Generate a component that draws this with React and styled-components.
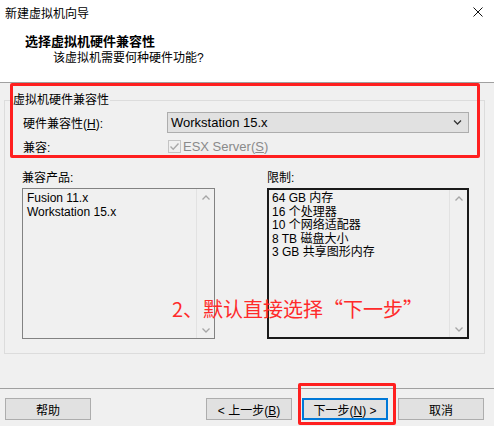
import styled, { createGlobalStyle } from "styled-components";

const GlobalStyle = createGlobalStyle`
  html, body {
    margin: 0;
    padding: 0;
    background: #ffffff;
  }
  body {
    font-family: "Liberation Sans", "Noto Sans CJK SC", sans-serif;
    font-size: 12px;
    color: #000;
  }
`;

const Window = styled.div`
  position: relative;
  width: 494px;
  height: 426px;
  display: flex;
  flex-direction: column;
  background: #f0f0f0;
  overflow: hidden;
`;

const Header = styled.header`
  height: 82px;
  background: #ffffff;
  border-bottom: 1px solid #a0a0a0;
  display: flex;
  flex-direction: column;
`;

const TitleBar = styled.div`
  height: 24px;
  display: flex;
  align-items: center;
  justify-content: space-between;
  padding: 0 11px 0 5px;
  font-size: 12px;
`;

const Heading = styled.div`
  margin-top: 10px;
  padding-left: 25px;
  font-size: 13px;
  font-weight: bold;
  line-height: 16px;
`;

const SubHeading = styled.div`
  padding-left: 53px;
  line-height: 16px;
`;

const Body = styled.main`
  height: 305px;
  padding: 9px 9px 0 4px;
  box-sizing: border-box;
`;

const Group = styled.fieldset`
  margin: 0;
  padding: 0 0 14px 0;
  border: 1px solid #dcdcdc;
  min-width: 0;
`;

const Legend = styled.legend`
  margin-left: 8px;
  padding: 0 1px 0 0;
  line-height: 16px;
`;

const Row = styled.div`
  display: flex;
  align-items: center;
  height: ${(p) => p.$h}px;
  margin-top: ${(p) => p.$mt}px;
  padding-left: 18px;
`;

const Label = styled.span`
  width: 144px;
  flex: none;
`;

const Select = styled.div`
  width: 302px;
  height: 21px;
  box-sizing: border-box;
  border: 1px solid #adadad;
  background: #e1e1e1;
  display: flex;
  align-items: center;
  justify-content: space-between;
  padding: 0 6px 0 3px;
  font-size: 13px;
`;

const Check = styled.label`
  display: flex;
  align-items: center;
  gap: 2px;
  margin-left: 1px;
  color: #8a8a8a;
  font-size: 13px;
`;

const ListGrid = styled.div`
  display: grid;
  grid-template-columns: 193px 202px;
  column-gap: 52px;
  margin-top: 15px;
  padding-left: 17px;
`;

const ListLabel = styled.div`
  line-height: 16px;
  margin-bottom: 2px;
`;

const ListBox = styled.div`
  height: 151px;
  box-sizing: border-box;
  border: ${(p) => (p.$focus ? "2px solid #1a1a1a" : "1px solid #828282")};
  display: flex;
  background: #f0f0f0;
`;

const ListItems = styled.div`
  flex: 1;
  padding: ${(p) => (p.$focus ? "2px 0 0 3px" : "3px 0 0 4px")};
  line-height: 13.5px;
  font-size: 12px;
`;

const ScrollBar = styled.div`
  width: 17px;
  border-left: 1px solid #e2e2e2;
  display: flex;
  flex-direction: column;
  justify-content: space-between;
  align-items: center;
  padding: 6px 0 5px;
`;

const Footer = styled.footer`
  border-top: 1px solid #a0a0a0;
  padding: 9px 8px 0 5px;
  display: flex;
  gap: 10px;
`;

const Button = styled.button`
  width: 86px;
  height: 22px;
  box-sizing: border-box;
  background: #e1e1e1;
  border: ${(p) => (p.$default ? "2px solid #0078d7" : "1px solid #adadad")};
  font-family: "Liberation Sans", "Noto Sans CJK SC", sans-serif;
  font-size: 12px;
  color: #000;
  padding: 0;
  margin-right: ${(p) => p.$push || 0}px;
`;

const Highlight = styled.div`
  position: absolute;
  left: ${(p) => p.$x}px;
  top: ${(p) => p.$y}px;
  width: ${(p) => p.$w}px;
  height: ${(p) => p.$h}px;
  box-sizing: border-box;
  border: 3px solid #ff1f1f;
  border-radius: 2px;
  pointer-events: none;
`;

const Note = styled.div`
  position: absolute;
  left: 172px;
  top: 296px;
  font-family: "Noto Sans CJK SC", sans-serif;
  font-size: 20px;
  line-height: 26px;
  color: #ff2a2a;
  white-space: nowrap;
`;

const U = styled.span`
  text-decoration: underline;
`;

function Chevron({ up, color = "#a6a6a6", w = 8 }) {
  return (
    <svg width={w} height="5" viewBox="0 0 8 5">
      <path
        d={up ? "M0.5 4.5 L4 1 L7.5 4.5" : "M0.5 0.5 L4 4 L7.5 0.5"}
        fill="none"
        stroke={color}
        strokeWidth="1.3"
      />
    </svg>
  );
}

function Scroll() {
  return (
    <ScrollBar>
      <Chevron up />
      <Chevron />
    </ScrollBar>
  );
}

export default function App() {
  return (
    <>
      <GlobalStyle />
      <Window>
        <Header>
          <TitleBar>
            <span>新建虚拟机向导</span>
            <svg width="10" height="10" viewBox="0 0 10 10">
              <path d="M0.5 0.5 L9.5 9.5 M9.5 0.5 L0.5 9.5" stroke="#111" strokeWidth="1" />
            </svg>
          </TitleBar>
          <Heading>选择虚拟机硬件兼容性</Heading>
          <SubHeading>该虚拟机需要何种硬件功能?</SubHeading>
        </Header>

        <Body>
          <Group>
            <Legend>虚拟机硬件兼容性</Legend>
            <Row $h={21} $mt={4}>
              <Label>
                硬件兼容性(<U>H</U>):
              </Label>
              <Select>
                <span>Workstation 15.x</span>
                <Chevron color="#333" w={9} />
              </Select>
            </Row>
            <Row $h={18} $mt={4}>
              <Label>兼容:</Label>
              <Check>
                <svg width="13" height="13" viewBox="0 0 13 13">
                  <rect x="0.5" y="0.5" width="12" height="12" fill="#f0f0f0" stroke="#c4c4c4" />
                  <path d="M2.5 6.5 L5.2 9.2 L10.5 3.5" fill="none" stroke="#a8a8a8" strokeWidth="1.4" />
                </svg>
                <span>
                  ESX Server(<U>S</U>)
                </span>
              </Check>
            </Row>
            <ListGrid>
              <div>
                <ListLabel>兼容产品:</ListLabel>
                <ListBox>
                  <ListItems>
                    <div>Fusion 11.x</div>
                    <div>Workstation 15.x</div>
                  </ListItems>
                  <Scroll />
                </ListBox>
              </div>
              <div>
                <ListLabel>限制:</ListLabel>
                <ListBox $focus>
                  <ListItems $focus>
                    <div>64 GB 内存</div>
                    <div>16 个处理器</div>
                    <div>10 个网络适配器</div>
                    <div>8 TB 磁盘大小</div>
                    <div>3 GB 共享图形内存</div>
                  </ListItems>
                  <Scroll />
                </ListBox>
              </div>
            </ListGrid>
          </Group>
        </Body>

        <Footer>
          <Button $push={105}>帮助</Button>
          <Button>
            &lt; 上一步(<U>B</U>)
          </Button>
          <Button $default>
            下一步(<U>N</U>) &gt;
          </Button>
          <Button>取消</Button>
        </Footer>

        <Highlight $x={10} $y={83} $w={470} $h={75} />
        <Highlight $x={298} $y={383} $w={98} $h={42} />
        <Note>2、默认直接选择“下一步”</Note>
      </Window>
    </>
  );
}
